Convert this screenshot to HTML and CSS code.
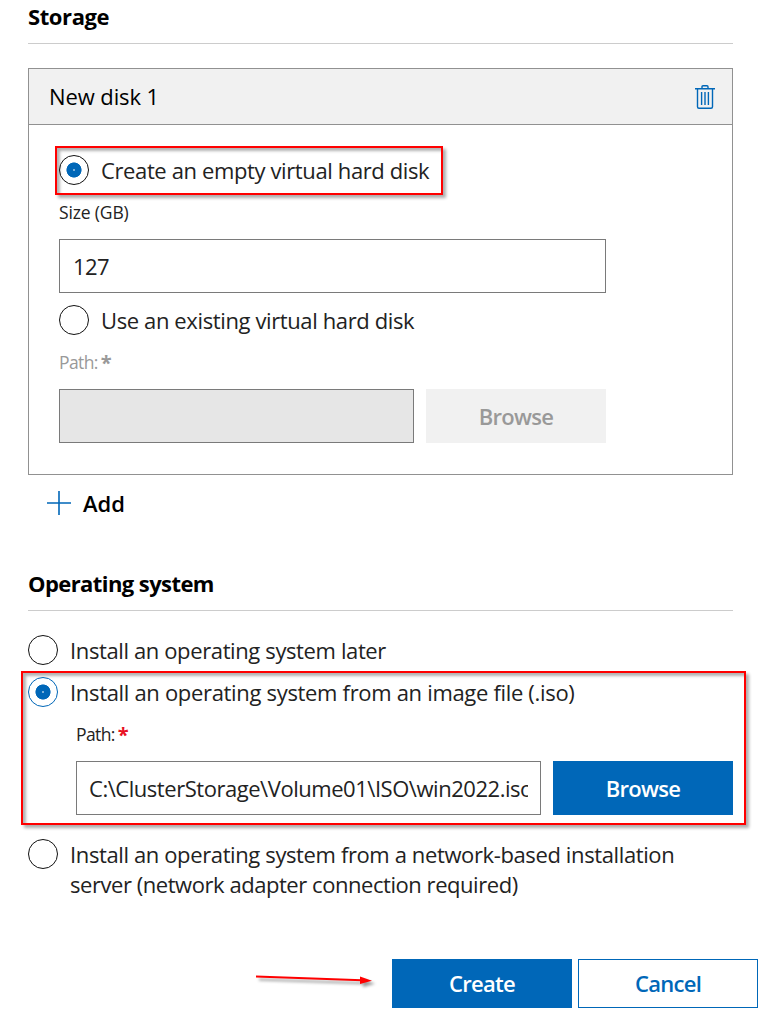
FILE: index.html
```html
<!DOCTYPE html>
<html lang="en">
<head>
<meta charset="utf-8">
<title>New virtual machine</title>
<link rel="stylesheet" href="styles.css">
</head>
<body>
<main class="form">
  <section class="storage">
    <h2 class="heading"><span class="t-storage">Storage</span></h2>
    <div class="card">
      <header class="card-header">
        <span class="t-disk">New disk 1</span>
        <svg class="trash" width="20" height="24" viewBox="0 0 20 24" fill="none" stroke="#0067b8" stroke-width="1.4">
          <path d="M0 3.7H20M7 3.5V1.7Q7 .7 8 .7H12Q13 .7 13 1.7V3.5M2.5 4V21.8Q2.5 23.3 4 23.3H16Q17.5 23.3 17.5 21.8V4M6.6 7V20M10 7V20M13.4 7V20"/>
        </svg>
      </header>
      <div class="card-body">
        <div class="marked marked-disk">
          <label class="option"><i class="radio radio-on"></i><span class="t-empty">Create an empty virtual hard disk</span></label>
        </div>
        <div class="label"><span class="t-size">Size (GB)</span></div>
        <div class="input wide"><span class="t-num">127</span></div>
        <label class="option option-existing"><i class="radio"></i><span class="t-existing">Use an existing virtual hard disk</span></label>
        <div class="label muted"><span class="t-path">Path:</span><b>*</b></div>
        <div class="row">
          <div class="input disabled"></div>
          <button class="button button-disabled"><span class="t-browse">Browse</span></button>
        </div>
      </div>
    </div>
    <div class="add">
      <svg width="24" height="24" viewBox="0 0 24 24" stroke="#0067b8" fill="none"><path d="M0 12H24M12 0V24" stroke-width="1.6"/></svg>
      <span class="t-add">Add</span>
    </div>
  </section>
  <section class="system">
    <h2 class="heading"><span class="t-os">Operating system</span></h2>
    <label class="option option-later"><i class="radio"></i><span class="t-later">Install an operating system later</span></label>
    <div class="marked marked-iso">
      <label class="option"><i class="radio radio-on radio-blue"></i><span class="t-iso">Install an operating system from an image file (.iso)</span></label>
      <div class="nested">
        <div class="label required"><span class="t-path">Path:</span><b>*</b></div>
        <div class="row">
          <div class="input"><span class="clip"><span class="t-file">C:\ClusterStorage\Volume01\ISO\win2022.iso</span></span></div>
          <button class="button button-primary"><span class="t-browse">Browse</span></button>
        </div>
      </div>
    </div>
    <label class="option option-network"><i class="radio"></i><span class="lines"><span class="t-net1">Install an operating system from a network-based installation</span><br><span class="t-net2">server (network adapter connection required)</span></span></label>
  </section>
</main>
<footer class="actions">
  <svg class="arrow" width="124" height="20" viewBox="0 0 124 20">
    <path d="M0 6.5L106 10.2" stroke="#f00" stroke-width="2"/><path d="M104 6.6V14L116 10.7Z" fill="#f00"/>
  </svg>
  <button class="button button-primary"><span class="t-create">Create</span></button>
  <button class="button button-outline"><span class="t-cancel">Cancel</span></button>
</footer>
</body>
</html>
```
FILE: styles.css
```css
* { box-sizing: border-box; }
body {
  margin: 0;
  width: 766px;
  height: 1021px;
  overflow: hidden;
  background: #fff;
  color: #222;
  font: 400 22px/30px "Open Sans", "Noto Sans", sans-serif;
}
span { white-space: nowrap; }
.form { width: 705px; margin-left: 28px; }
.heading {
  margin: 0;
  height: 44px;
  padding-top: 1px;
  border-bottom: 1px solid #ccc;
  color: #000;
  font-size: 22px;
  font-weight: 700;
  line-height: 30px;
}
.card { height: 407px; margin-top: 24px; border: 1px solid #919191; }
.card-header {
  display: flex;
  align-items: center;
  justify-content: space-between;
  height: 56px;
  padding: 0 17px 0 20px;
  border-bottom: 1px solid #919191;
  background: #f1f1f1;
  color: #000;
  font-weight: 500;
}
.card-header span { padding-bottom: 2px; letter-spacing: -.1px; }
.card-body { width: 577px; padding: 21px 0 0 30px; }
.option { display: flex; gap: 12px; height: 30px; letter-spacing: -.38px; }
.radio {
  flex: none;
  width: 30px;
  height: 30px;
  border: 1px solid #111;
  border-radius: 50%;
}
.radio-on { background: radial-gradient(circle, #fff 0 .5px, #0067b8 .9px 7.2px, transparent 7.9px); }
.radio-blue { border-color: #0067b8; }
.marked {
  border: 2px solid #f00;
  box-shadow: 3px 3px 3px rgba(0, 0, 0, .32), inset 3px 3px 3px rgba(0, 0, 0, .3);
}
.marked-disk { width: 388px; height: 49px; margin-left: -4px; padding: 7px 0 0 2px; }
.label { display: flex; gap: 3px; height: 24px; font-size: 17.5px; line-height: 22px; }
.card-body .marked + .label { margin-top: 6px; }
.muted { margin-top: 16px; color: #999; }
.label b { font-size: 20px; line-height: 24px; }
.required b { color: #e81123; }
.input {
  flex: 1;
  min-width: 0;
  height: 54px;
  padding: 11px 12px;
  border: 1px solid #7a7a7a;
  background: #fff;
  line-height: 30px;
}
.wide { margin-top: 14px; padding-left: 13px; }
.option-existing { margin-top: 12px; }
.disabled { background: #e6e6e6; }
.row { display: flex; gap: 12px; margin-top: 14px; }
.button {
  flex: none;
  width: 180px;
  height: 54px;
  padding: 0;
  border: 0;
  font: 600 22px/30px "Open Sans", "Noto Sans", sans-serif;
  letter-spacing: -.7px;
}
.button-disabled { background: #f1f1f1; color: #999; }
.button-primary { background: #0067b8; color: #fff; }
.button-outline { border: 1px solid #0067b8; background: #fff; color: #0067b8; }
.add {
  display: flex;
  align-items: center;
  gap: 12px;
  height: 30px;
  margin: 13px 0 0 19px;
  color: #000;
  font-weight: 600;
}
.system { margin-top: 49px; }
.option-later { margin-top: 24px; }
.marked-iso { width: 725px; height: 154px; margin: 6px 0 0 -7px; padding: 4px 0 0 5px; }
.nested { width: 657px; margin: 16px 0 0 48px; }
.clip { display: block; overflow: hidden; height: 30px; }
.option-network { height: 60px; margin-top: 14px; }
.actions { display: flex; justify-content: flex-end; gap: 6px; margin: 60px 8px 0 0; }
.actions .button { height: 49px; padding-bottom: 2px; }
.arrow { margin: 11px 6px 0 0; filter: drop-shadow(3px 3px 1.5px rgba(0, 0, 0, .4)); }
.t-storage { letter-spacing: -.4px; }
.t-os { letter-spacing: -.58px; }
.t-iso { letter-spacing: -.32px; }
.t-net2 { letter-spacing: -.45px; }
.t-num { letter-spacing: -.6px; }
.t-file { letter-spacing: -.46px; }
.t-size { letter-spacing: -.15px; }
.t-path { letter-spacing: -.6px; }
```
